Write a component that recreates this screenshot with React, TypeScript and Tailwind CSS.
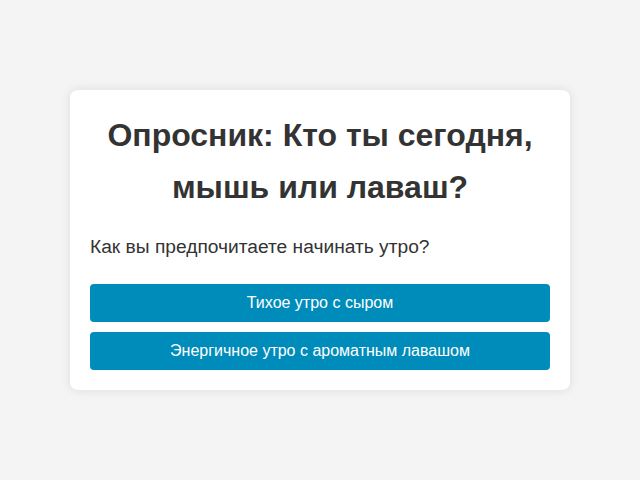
import { useState } from 'react'

const options = [
  'Тихое утро с сыром',
  'Энергичное утро с ароматным лавашом',
]

export default function App() {
  const [picked, setPicked] = useState<number | null>(null)

  return (
    <div
      className="flex min-h-screen items-center justify-center bg-[#f4f4f4] text-[#333]"
      style={{ fontFamily: '"Liberation Sans", Arial, sans-serif' }}
    >
      <div className="w-[500px] rounded-lg bg-white p-5 shadow-[0_0_10px_rgba(0,0,0,0.1)]">
        <h1 className="text-center text-[32px] font-bold leading-[1.6]">
          Опросник: Кто ты сегодня, мышь или лаваш?
        </h1>
        <p className="mt-[19px] text-[19.2px] leading-[1.6]">Как вы предпочитаете начинать утро?</p>
        <div className="mt-[21px] flex flex-col gap-2.5">
          {options.map((opt, i) => (
            <button
              key={i}
              onClick={() => setPicked(i)}
              className={`h-[38px] w-full rounded bg-[#008cba] text-base text-white ${
                picked === i ? 'bg-[#007ba3]' : ''
              }`}
            >
              {opt}
            </button>
          ))}
        </div>
      </div>
    </div>
  )
}
